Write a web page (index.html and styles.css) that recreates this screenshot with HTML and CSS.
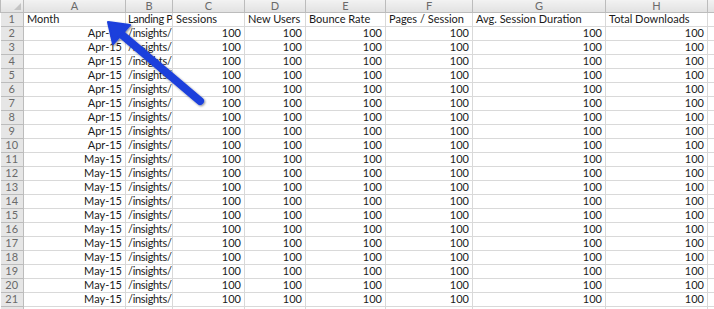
FILE: index.html
```html
<!DOCTYPE html>
<html>
	<head>
		<meta charset="UTF-8">
		<title>Analytics export</title>
		<link rel="stylesheet" href="styles.css">
	</head>
	<body>
		<div class="sheet">
			<table class="grid">
				<colgroup>
					<col class="c-row">
					<col class="c-a">
					<col class="c-b">
					<col class="c-c">
					<col class="c-d">
					<col class="c-e">
					<col class="c-f">
					<col class="c-g">
					<col class="c-h">
					<col class="c-i">
				</colgroup>
				<thead>
					<tr class="letters">
						<th class="corner"><span class="tri"></span></th>
						<th>A</th><th>B</th><th>C</th><th>D</th><th>E</th><th>F</th><th>G</th><th>H</th><th></th>
					</tr>
				</thead>
				<tbody id="rows">
					<tr>
						<th class="num">1</th>
						<td>Month</td><td class="path">Landing P</td><td>Sessions</td><td>New Users</td><td>Bounce Rate</td><td>Pages / Session</td><td>Avg. Session Duration</td><td>Total Downloads</td><td></td>
					</tr>
				</tbody>
			</table>

			<svg class="arrow" width="714" height="309" viewBox="0 0 714 309">
				<defs>
					<filter id="shade" x="-20%" y="-20%" width="140%" height="140%">
						<feDropShadow dx="1" dy="1" stdDeviation="1" flood-color="#000" flood-opacity="0.45"/>
					</filter>
				</defs>
				<g filter="url(#shade)">
					<line x1="200" y1="101" x2="121" y2="34" stroke="#1b3fdc" stroke-width="8" stroke-linecap="round"/>
					<polygon points="108,22 130,25 113,44" fill="#1b3fdc" stroke="#1b3fdc" stroke-width="2" stroke-linejoin="round"/>
				</g>
			</svg>
		</div>

		<script>
			var body = document.getElementById('rows');
			for (var r = 2; r <= 22; r++) {
				var month = r <= 10 ? 'Apr-15' : 'May-15';
				var tr = document.createElement('tr');
				var html;
				if (r <= 21) {
					html = '<th class="num">' + r + '</th>';
					html += '<td class="r">' + month + '</td><td class="path">/insights/</td>';
					for (var c = 0; c < 6; c++) html += '<td class="r">100</td>';
				} else {
					// partly visible row at the bottom edge
					html = '<th class="num"></th>';
					for (var c = 0; c < 8; c++) html += '<td></td>';
				}
				html += '<td></td>';
				tr.innerHTML = html;
				body.appendChild(tr);
			}
		</script>
	</body>
</html>
```

FILE: styles.css
```css
html, body {
	margin: 0;
	padding: 0;
	background: #ffffff;
	overflow: hidden;
}
.sheet {
	position: relative;
	width: 714px;
	height: 309px;
	overflow: hidden;
}
table.grid {
	border-collapse: collapse;
	table-layout: fixed;
	width: 714px;
	font-family: Lato, "Liberation Sans", sans-serif;
	font-size: 11px;
	color: #1a1a1a;
}
col.c-row { width: 23px; }
col.c-a { width: 102px; }
col.c-b { width: 47px; }
col.c-c { width: 72px; }
col.c-d { width: 61px; }
col.c-e { width: 80px; }
col.c-f { width: 87px; }
col.c-g { width: 133px; }
col.c-h { width: 102px; }
col.c-i { width: 7px; }

td, th {
	padding: 0 3px;
	white-space: nowrap;
	overflow: hidden;
	border: 1px solid #d9d9d9;
	line-height: 12px;
	height: 13px;
	box-sizing: border-box;
}
td {
	text-align: left;
	font-weight: normal;
}
td.r {
	text-align: right;
}
td.path {
	padding: 0 0 0 2px;
	letter-spacing: -0.3px;
}
tr.letters th {
	height: 12px;
	line-height: 11px;
	font-size: 11px;
	font-weight: normal;
	color: #6a6a6a;
	text-align: center;
	background: linear-gradient(#f2f2f2, #e2e2e2);
	border: 1px solid #bcbcbc;
	border-top: none;
}
th.num {
	font-weight: normal;
	color: #6a6a6a;
	text-align: center;
	background: #e6e6e6;
	border: 1px solid #bcbcbc;
	border-left: none;
	padding: 0;
}
tbody tr {
	height: 14px;
}
th.corner {
	position: relative;
	padding: 0;
}
.tri {
	position: absolute;
	right: 2px;
	bottom: 2px;
	width: 0;
	height: 0;
	border-left: 7px solid transparent;
	border-bottom: 7px solid #c4c4c4;
}
svg.arrow {
	position: absolute;
	left: 0;
	top: 0;
	pointer-events: none;
}
```
